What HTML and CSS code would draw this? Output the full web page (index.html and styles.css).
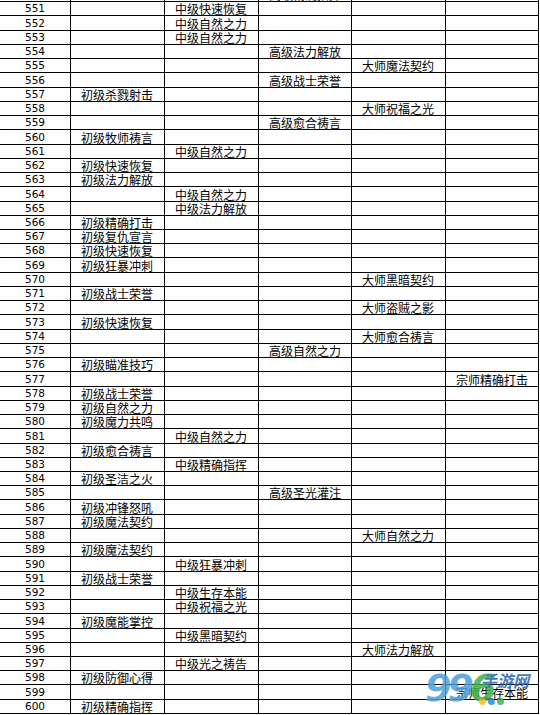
FILE: index.html
```html
<!DOCTYPE html>
<html lang="zh">
<head>
<meta charset="utf-8">
<title>技能表</title>
<link rel="stylesheet" href="styles.css">
</head>
<body>
<div class="sheet">
<table class="grid">
<colgroup><col class="c1"><col class="c2"><col class="c3"><col class="c4"><col class="c5"><col class="c6"></colgroup>
<tbody>
<tr><td class="n"></td><td></td><td></td><td><span class="u">高级精确指挥</span></td><td></td><td></td></tr>
<tr><td class="n">551</td><td></td><td><span class="u">中级快速恢复</span></td><td></td><td></td><td></td></tr>
<tr><td class="n">552</td><td></td><td><span class="u">中级自然之力</span></td><td></td><td></td><td></td></tr>
<tr><td class="n">553</td><td></td><td><span class="u">中级自然之力</span></td><td></td><td></td><td></td></tr>
<tr><td class="n">554</td><td></td><td></td><td><span class="u">高级法力解放</span></td><td></td><td></td></tr>
<tr><td class="n">555</td><td></td><td></td><td></td><td><span class="u">大师魔法契约</span></td><td></td></tr>
<tr><td class="n">556</td><td></td><td></td><td><span class="u">高级战士荣誉</span></td><td></td><td></td></tr>
<tr><td class="n">557</td><td><span class="u">初级杀戮射击</span></td><td></td><td></td><td></td><td></td></tr>
<tr><td class="n">558</td><td></td><td></td><td></td><td><span class="u">大师祝福之光</span></td><td></td></tr>
<tr><td class="n">559</td><td></td><td></td><td><span class="u">高级愈合祷言</span></td><td></td><td></td></tr>
<tr><td class="n">560</td><td><span class="u">初级牧师祷言</span></td><td></td><td></td><td></td><td></td></tr>
<tr><td class="n">561</td><td></td><td><span class="u">中级自然之力</span></td><td></td><td></td><td></td></tr>
<tr><td class="n">562</td><td><span class="u">初级快速恢复</span></td><td></td><td></td><td></td><td></td></tr>
<tr><td class="n">563</td><td><span class="u">初级法力解放</span></td><td></td><td></td><td></td><td></td></tr>
<tr><td class="n">564</td><td></td><td><span class="u">中级自然之力</span></td><td></td><td></td><td></td></tr>
<tr><td class="n">565</td><td></td><td><span class="u">中级法力解放</span></td><td></td><td></td><td></td></tr>
<tr><td class="n">566</td><td><span class="u">初级精确打击</span></td><td></td><td></td><td></td><td></td></tr>
<tr><td class="n">567</td><td><span class="u">初级复仇宣言</span></td><td></td><td></td><td></td><td></td></tr>
<tr><td class="n">568</td><td><span class="u">初级快速恢复</span></td><td></td><td></td><td></td><td></td></tr>
<tr><td class="n">569</td><td><span class="u">初级狂暴冲刺</span></td><td></td><td></td><td></td><td></td></tr>
<tr><td class="n">570</td><td></td><td></td><td></td><td><span class="u">大师黑暗契约</span></td><td></td></tr>
<tr><td class="n">571</td><td><span class="u">初级战士荣誉</span></td><td></td><td></td><td></td><td></td></tr>
<tr><td class="n">572</td><td></td><td></td><td></td><td><span class="u">大师盗贼之影</span></td><td></td></tr>
<tr><td class="n">573</td><td><span class="u">初级快速恢复</span></td><td></td><td></td><td></td><td></td></tr>
<tr><td class="n">574</td><td></td><td></td><td></td><td><span class="u">大师愈合祷言</span></td><td></td></tr>
<tr><td class="n">575</td><td></td><td></td><td><span class="u">高级自然之力</span></td><td></td><td></td></tr>
<tr><td class="n">576</td><td><span class="u">初级瞄准技巧</span></td><td></td><td></td><td></td><td></td></tr>
<tr><td class="n">577</td><td></td><td></td><td></td><td></td><td><span>宗师精确打击</span></td></tr>
<tr><td class="n">578</td><td><span class="u">初级战士荣誉</span></td><td></td><td></td><td></td><td></td></tr>
<tr><td class="n">579</td><td><span class="u">初级自然之力</span></td><td></td><td></td><td></td><td></td></tr>
<tr><td class="n">580</td><td><span class="u">初级魔力共鸣</span></td><td></td><td></td><td></td><td></td></tr>
<tr><td class="n">581</td><td></td><td><span class="u">中级自然之力</span></td><td></td><td></td><td></td></tr>
<tr><td class="n">582</td><td><span class="u">初级愈合祷言</span></td><td></td><td></td><td></td><td></td></tr>
<tr><td class="n">583</td><td></td><td><span class="u">中级精确指挥</span></td><td></td><td></td><td></td></tr>
<tr><td class="n">584</td><td><span class="u">初级圣洁之火</span></td><td></td><td></td><td></td><td></td></tr>
<tr><td class="n">585</td><td></td><td></td><td><span class="u">高级圣光灌注</span></td><td></td><td></td></tr>
<tr><td class="n">586</td><td><span class="u">初级冲锋怒吼</span></td><td></td><td></td><td></td><td></td></tr>
<tr><td class="n">587</td><td><span class="u">初级魔法契约</span></td><td></td><td></td><td></td><td></td></tr>
<tr><td class="n">588</td><td></td><td></td><td></td><td><span class="u">大师自然之力</span></td><td></td></tr>
<tr><td class="n">589</td><td><span class="u">初级魔法契约</span></td><td></td><td></td><td></td><td></td></tr>
<tr><td class="n">590</td><td></td><td><span class="u">中级狂暴冲刺</span></td><td></td><td></td><td></td></tr>
<tr><td class="n">591</td><td><span class="u">初级战士荣誉</span></td><td></td><td></td><td></td><td></td></tr>
<tr><td class="n">592</td><td></td><td><span class="u">中级生存本能</span></td><td></td><td></td><td></td></tr>
<tr><td class="n">593</td><td></td><td><span class="u">中级祝福之光</span></td><td></td><td></td><td></td></tr>
<tr><td class="n">594</td><td><span class="u">初级魔能掌控</span></td><td></td><td></td><td></td><td></td></tr>
<tr><td class="n">595</td><td></td><td><span class="u">中级黑暗契约</span></td><td></td><td></td><td></td></tr>
<tr><td class="n">596</td><td></td><td></td><td></td><td><span>大师法力解放</span></td><td></td></tr>
<tr><td class="n">597</td><td></td><td><span class="u">中级光之祷告</span></td><td></td><td></td><td></td></tr>
<tr><td class="n">598</td><td><span class="u">初级防御心得</span></td><td></td><td></td><td></td><td></td></tr>
<tr><td class="n">599</td><td></td><td></td><td></td><td></td><td><span>宗师生存本能</span></td></tr>
<tr><td class="n">600</td><td><span class="u">初级精确指挥</span></td><td></td><td></td><td></td><td></td></tr>
</tbody>
</table>
<div class="logo">
  <span class="d99">99</span><span class="d6">6</span><span class="site">手游网</span>
  <span class="dots"><i class="y"></i><i class="b"></i><i class="g"></i></span>
</div>
</div>
</body>
</html>
```

FILE: styles.css
```css
html, body {
  margin: 0;
  padding: 0;
  background: #ffffff;
}
.sheet {
  position: relative;
  width: 540px;
  height: 715px;
  overflow: hidden;
}
.grid {
  border-collapse: collapse;
  table-layout: fixed;
  width: 539px;
  margin-top: -13px;
  margin-left: -1px;
  font-family: "Noto Sans CJK SC", "Liberation Sans", sans-serif;
  font-size: 12px;
  color: #000;
}
.c1 { width: 71px; }
.c2 { width: 94px; }
.c3 { width: 94px; }
.c4 { width: 93px; }
.c5 { width: 94px; }
.c6 { width: 93px; }
.grid td {
  border: 1px solid #000;
  height: 13.24px;
  padding: 0 0 0 10px;
  line-height: 13px;
  white-space: nowrap;
  overflow: hidden;
  vertical-align: bottom;
}
.grid td.n {
  padding: 0;
  text-align: center;
  font-family: "DejaVu Sans", "Liberation Sans", sans-serif;
  font-size: 10.5px;
  line-height: 13px;
}
.u {
  text-decoration: underline;
  text-underline-offset: 1px;
  text-decoration-thickness: 1px;
}
.logo {
  position: absolute;
  left: 425px;
  top: 668px;
  width: 112px;
  height: 44px;
  opacity: 0.85;
  font-family: "DejaVu Sans", "Liberation Sans", sans-serif;
}
.d99, .d6 {
  font-size: 38px;
  font-weight: bold;
  font-style: italic;
  letter-spacing: -4px;
  line-height: 40px;
}
.d99 { color: #4e9fd9; }
.d6 { color: #3fb04a; }
.site {
  position: absolute;
  left: 56px;
  top: 3px;
  font-family: "Noto Sans CJK SC", sans-serif;
  font-size: 16px;
  font-weight: bold;
  font-style: italic;
  color: #2266aa;
  line-height: 18px;
}
.dots {
  position: absolute;
  left: 54px;
  top: 30px;
  display: flex;
  gap: 2px;
}
.dots i {
  width: 7px;
  height: 7px;
  border-radius: 50%;
}
.dots .y { background: #f2c01e; }
.dots .b { background: #2b8fd4; }
.dots .g { background: #41b54b; }
```
